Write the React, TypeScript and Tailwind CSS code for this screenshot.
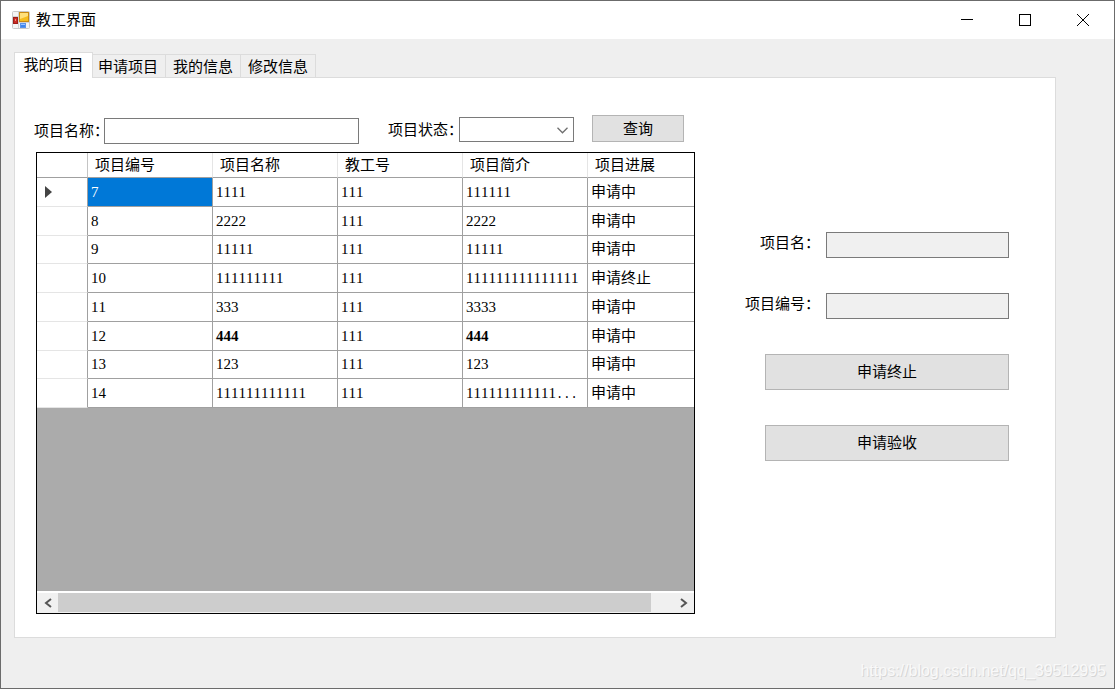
import { useState } from 'react';
import type { ButtonHTMLAttributes } from 'react';
import clsx from 'clsx';

const tabs = ['我的项目', '申请项目', '我的信息', '修改信息'];

const columns = ['项目编号', '项目名称', '教工号', '项目简介', '项目进展'];

interface Project {
  id: string;
  name: string;
  staff: string;
  intro: string;
  status: string;
  more?: boolean;
  bold?: boolean;
}

const projects: Project[] = [
  { id: '7', name: '1111', staff: '111', intro: '111111', status: '申请中' },
  { id: '8', name: '2222', staff: '111', intro: '2222', status: '申请中' },
  { id: '9', name: '11111', staff: '111', intro: '11111', status: '申请中' },
  { id: '10', name: '111111111', staff: '111', intro: '111111111111111', status: '申请终止' },
  { id: '11', name: '333', staff: '111', intro: '3333', status: '申请中' },
  { id: '12', name: '444', staff: '111', intro: '444', status: '申请中', bold: true },
  { id: '13', name: '123', staff: '111', intro: '123', status: '申请中' },
  { id: '14', name: '111111111111', staff: '111', intro: '111111111111', status: '申请中', more: true }
];

function AppIcon() {
  return (
    <svg width="18" height="18" viewBox="0 0 18 18" aria-hidden="true">
      <rect x="0.5" y="0.5" width="17" height="17" rx="1" fill="#f4f4f4" stroke="#c9c9c9" />
      <path d="M6.5 1v16M1 11.5h16M1 5.5h6" stroke="#d2d2d2" />
      <rect x="7.5" y="1.5" width="9" height="9" fill="#f5bd1f" stroke="#c98a12" />
      <path d="M8 2h8v3l-8 3z" fill="#ffe07a" />
      <rect x="1.5" y="6.5" width="4" height="6" fill="#c92a22" stroke="#9d1c18" />
      <rect x="3" y="8" width="1" height="2" fill="#f08a80" />
      <rect x="8.5" y="12.5" width="5" height="4" fill="#3f86ee" stroke="#5b93ea" />
      <rect x="9" y="13" width="4" height="1" fill="#9cc4ff" />
    </svg>
  );
}

function TitleBar() {
  const control = 'flex w-[58px] items-center justify-center hover:bg-gray-200';

  return (
    <header className="flex h-[38px] shrink-0 bg-white pl-[11px] pr-[2px]">
      <div className="flex flex-1 items-center gap-[6px]">
        <AppIcon />
        <h1>教工界面</h1>
      </div>
      <button type="button" aria-label="最小化" className={control}>
        <svg width="12" height="12" viewBox="0 0 12 12" stroke="#000">
          <path d="M0 5.5h12" />
        </svg>
      </button>
      <button type="button" aria-label="最大化" className={control}>
        <svg width="12" height="12" viewBox="0 0 12 12" fill="none" stroke="#000">
          <rect x="0.5" y="0.5" width="11" height="11" />
        </svg>
      </button>
      <button type="button" aria-label="关闭" className={control}>
        <svg width="12" height="12" viewBox="0 0 12 12" stroke="#000">
          <path d="M0 0l12 12M12 0L0 12" />
        </svg>
      </button>
    </header>
  );
}

function PushButton({ className, ...props }: ButtonHTMLAttributes<HTMLButtonElement>) {
  return (
    <button
      type="button"
      className={clsx('border border-[#b4b4b4] bg-[#e1e1e1] hover:border-[#0078d7] hover:bg-[#e5f1fb]', className)}
      {...props}
    />
  );
}

function SearchBar() {
  return (
    <form className="flex h-[29px] items-center pr-[11px]" onSubmit={e => e.preventDefault()}>
      <label htmlFor="name" className="w-[70px] shrink-0 self-end whitespace-nowrap leading-[26px]">
        项目名称：
      </label>
      <input
        id="name"
        className="mr-[29px] h-[26px] min-w-0 flex-1 self-end border border-[#7a7a7a] bg-white px-1 outline-none"
      />
      <label htmlFor="status" className="w-[71px] shrink-0 whitespace-nowrap">
        项目状态：
      </label>
      <div className="relative mr-[18px] flex">
        <select
          id="status"
          defaultValue=""
          className="h-[25px] w-[115px] appearance-none border border-[#7a7a7a] bg-white px-1 outline-none"
        >
          <option value=""></option>
          <option>申请中</option>
          <option>申请终止</option>
        </select>
        <svg
          className="pointer-events-none absolute right-[6px] top-[10px]"
          width="11"
          height="7"
          viewBox="0 0 11 7"
          fill="none"
          stroke="#6e6e6e"
          strokeWidth="1.3"
        >
          <path d="M0.5 0.8l5 5 5-5" />
        </svg>
      </div>
      <PushButton type="submit" className="h-[27px] w-[92px] self-start">
        查询
      </PushButton>
    </form>
  );
}

function ScrollBar() {
  return (
    <div className="flex h-[22px] border-t-2 border-white bg-[#f0f0f0]">
      <button type="button" aria-label="向左滚动" className="flex w-[21px] items-center justify-center">
        <svg width="8" height="10" viewBox="0 0 8 10" fill="none" stroke="#555" strokeWidth="2">
          <path d="M7 1L2 5l5 4" />
        </svg>
      </button>
      <div className="flex-1 pr-[22px]">
        <div className="h-[19px] bg-[#cdcdcd]" />
      </div>
      <button type="button" aria-label="向右滚动" className="flex w-[21px] items-center justify-center">
        <svg width="8" height="10" viewBox="0 0 8 10" fill="none" stroke="#555" strokeWidth="2">
          <path d="M1 1l5 4-5 4" />
        </svg>
      </button>
    </div>
  );
}

function ProjectGrid() {
  const [selected, setSelected] = useState('7');

  return (
    <div className="flex min-h-0 flex-1 flex-col border border-black bg-[#ababab]">
      <div className="flex-1 overflow-hidden">
        <table className="h-[255px] w-[675px] table-fixed border-separate border-spacing-0 bg-white text-left">
          <thead>
            <tr className="h-[25px]">
              <th className="w-[51px] border-b border-r border-b-[#a0a0a0] border-r-[#c4c4c4]" />
              {columns.map(column => (
                <th
                  key={column}
                  className="w-[125px] border-b border-r border-b-[#a0a0a0] border-r-[#e5e5e5] pl-[7px] font-normal"
                >
                  {column}
                </th>
              ))}
            </tr>
          </thead>
          <tbody>
            {projects.map(project => (
              <tr key={project.id} onClick={() => setSelected(project.id)}>
                <th className="border-b border-r border-b-[#e5e5e5] border-r-[#a0a0a0] pl-[8px]">
                  {project.id === selected && (
                    <svg width="7" height="12" viewBox="0 0 7 12" fill="#444">
                      <path d="M0 0l7 6-7 6z" />
                    </svg>
                  )}
                </th>
                {[project.id, project.name, project.staff, project.intro, project.status].map((value, i) => (
                  <td
                    key={columns[i]}
                    className={clsx(
                      'border-b border-r border-[#a0a0a0] pl-[3px] [font-kerning:none]',
                      i === 0 && project.id === selected && 'bg-[#0078d7] text-white',
                      project.bold && (i === 1 || i === 3) && 'font-bold'
                    )}
                  >
                    {value}
                    {project.more && i === 3 && (
                      <span className="font-['Liberation_Mono'] text-[12px] leading-none">...</span>
                    )}
                  </td>
                ))}
              </tr>
            ))}
          </tbody>
        </table>
      </div>
      <ScrollBar />
    </div>
  );
}

function ReadOnlyField({ id, label }: { id: string; label: string }) {
  return (
    <div className="flex justify-end gap-[6px]">
      <label htmlFor={id} className="whitespace-nowrap leading-[22px]">
        {label}
      </label>
      <input id={id} readOnly className="h-[26px] w-[183px] border border-[#7a7a7a] bg-[#f0f0f0] px-1 outline-none" />
    </div>
  );
}

function MyProjects() {
  return (
    <div className="flex flex-1 gap-[50px] pb-[23px] pl-[19px] pr-[46px] pt-[37px]">
      <div className="flex min-w-0 flex-1 flex-col gap-2">
        <SearchBar />
        <div className="flex flex-1 flex-col pl-0.5">
          <ProjectGrid />
        </div>
      </div>
      <div className="flex w-[264px] shrink-0 flex-col gap-[35px] pt-[117px]">
        <ReadOnlyField id="detail-name" label="项目名：" />
        <ReadOnlyField id="detail-id" label="项目编号：" />
        <PushButton className="ml-5 h-[36px]">申请终止</PushButton>
        <PushButton className="ml-5 h-[36px]">申请验收</PushButton>
      </div>
    </div>
  );
}

export default function App() {
  const [active, setActive] = useState(0);

  return (
    <div className="flex min-h-screen flex-col border border-[#6b6b6b] bg-[#efefef] font-['Liberation_Serif','Noto_Sans_CJK_SC',serif] text-[15px] leading-[20px] text-black">
      <TitleBar />

      <main className="flex flex-1 flex-col pl-[13px] pr-[58px] pt-[13px]">
        <div role="tablist" className="flex h-[25px] items-end">
          {tabs.map((tab, i) => (
            <button
              key={tab}
              type="button"
              role="tab"
              aria-selected={i === active}
              onClick={() => setActive(i)}
              className={clsx(
                'border-[#dcdcdc]',
                i === active
                  ? 'relative z-10 -mr-[2px] -mb-px h-[26px] w-[79px] border-x border-t bg-white pb-[2px]'
                  : 'h-[23px] w-[75px] border-r border-t bg-[#efefef] pt-px'
              )}
            >
              {tab}
            </button>
          ))}
        </div>
        <div role="tabpanel" className="flex flex-1 flex-col border border-[#dcdcdc] bg-white">
          {active === 0 && <MyProjects />}
        </div>
      </main>

      <footer className="flex h-[50px] shrink-0 items-center justify-end pr-[8px] pt-[16px] font-['Liberation_Sans',sans-serif] text-[16px] text-[#f9f9f9] [text-shadow:1px_1px_0_#d6d6d6]">
        https://blog.csdn.net/qq_39512995
      </footer>
    </div>
  );
}
